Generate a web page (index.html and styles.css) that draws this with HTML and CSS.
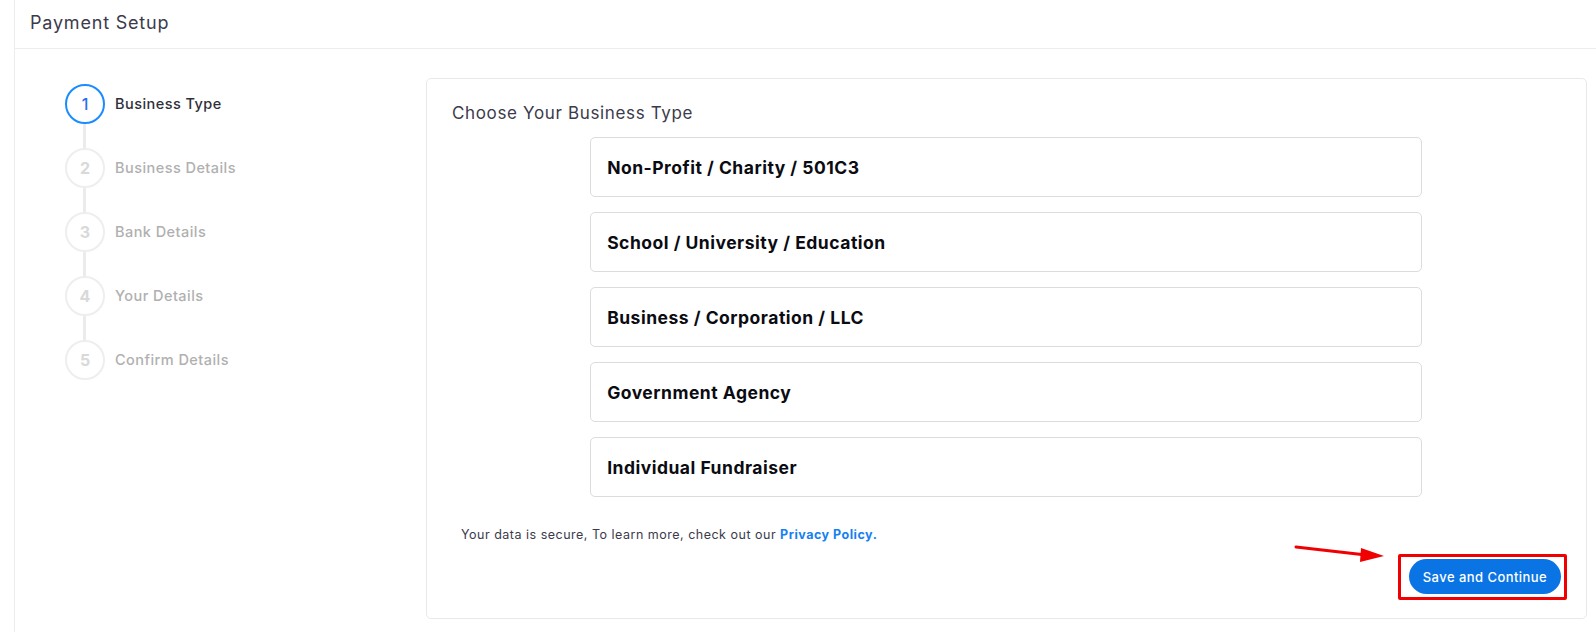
FILE: index.html
```html
<!DOCTYPE html>
<html lang="en">
<head>
<meta charset="utf-8">
<title>Payment Setup</title>
<link rel="stylesheet" href="styles.css">
</head>
<body>
<div class="page">
  <section class="outer-card">
    <header class="outer-header">Payment Setup</header>
    <div class="outer-body">
      <aside class="stepper">
        <div class="step active"><span class="step-num">1</span><span class="step-label">Business Type</span></div>
        <div class="step-line"></div>
        <div class="step"><span class="step-num">2</span><span class="step-label">Business Details</span></div>
        <div class="step-line"></div>
        <div class="step"><span class="step-num">3</span><span class="step-label">Bank Details</span></div>
        <div class="step-line"></div>
        <div class="step"><span class="step-num">4</span><span class="step-label">Your Details</span></div>
        <div class="step-line"></div>
        <div class="step"><span class="step-num">5</span><span class="step-label">Confirm Details</span></div>
      </aside>
      <main class="inner-card">
        <h2 class="inner-title">Choose Your Business Type</h2>
        <div class="options">
          <div class="option">Non-Profit / Charity / 501C3</div>
          <div class="option">School / University / Education</div>
          <div class="option">Business / Corporation / LLC</div>
          <div class="option">Government Agency</div>
          <div class="option">Individual Fundraiser</div>
        </div>
        <p class="secure">Your data is secure, To learn more, check out our <a class="policy" href="#">Privacy Policy.</a></p>
        <div class="actions">
          <button class="btn-primary" type="button">Save and Continue</button>
        </div>
      </main>
    </div>
  </section>
  <div class="annot-box"></div>
  <svg class="annot-arrow" width="100" height="20" viewBox="0 0 100 20">
    <line x1="2" y1="3" x2="72" y2="11" stroke="#f00000" stroke-width="3" stroke-linecap="round"/>
    <polygon points="90,12 67,4 66,18" fill="#f00000"/>
  </svg>
</div>
</body>
</html>
```

FILE: styles.css
```css
* { box-sizing: border-box; }
html, body { margin: 0; padding: 0; background: #fff; }
body {
  font-family: "Inter", "Open Sans", "Liberation Sans", sans-serif;
  color: #3b3b4c;
  width: 1596px;
  height: 632px;
  overflow: hidden;
}
.page {
  position: relative;
  padding-left: 14px;
  height: 632px;
}
.outer-card {
  border-left: 1px solid #ececec;
  height: 632px;
}
.outer-header {
  height: 49px;
  border-bottom: 1px solid #ececec;
  padding: 10px 0 0 15px;
  font-size: 18px;
  line-height: 26px;
  letter-spacing: 0.8px;
  color: #3b3b4c;
  font-weight: 400;
}
.outer-body {
  display: flex;
  padding-top: 29px;
}
.stepper {
  width: 411px;
  flex: none;
  padding: 6px 0 0 50px;
  display: flex;
  flex-direction: column;
}
.step {
  display: flex;
  align-items: center;
  gap: 10px;
}
.step-num {
  width: 40px;
  height: 40px;
  border-radius: 50%;
  border: 2px solid #eeeeee;
  display: flex;
  align-items: center;
  justify-content: center;
  font-size: 16px;
  font-weight: 700;
  color: #d9d9d9;
  flex: none;
}
.step-label {
  font-size: 14.5px;
  font-weight: 500;
  letter-spacing: 0.45px;
  color: #b0b0b0;
  margin-top: -2px;
}
.step.active .step-num {
  border-color: #1a8cff;
  color: #2a6df0;
  font-weight: 500;
}
.step.active .step-label { color: #2f2f3a; }
.step-line {
  width: 3px;
  height: 24px;
  background: #ebebeb;
  margin-left: 18px;
}
.inner-card {
  width: 1161px;
  height: 541px;
  border: 1px solid #e9e9e9;
  border-radius: 5px;
  padding: 21px 25px 24px 25px;
  display: flex;
  flex-direction: column;
}
.inner-title {
  margin: 0;
  font-size: 17px;
  line-height: 26px;
  letter-spacing: 0.65px;
  font-weight: 400;
  color: #3b3b4c;
}
.options {
  width: 75%;
  align-self: center;
  display: flex;
  flex-direction: column;
  gap: 15px;
  margin-top: 11px;
  margin-left: -1px;
}
.option {
  height: 60px;
  border: 1px solid #dcdcdc;
  border-radius: 5px;
  padding: 0 16px;
  display: flex;
  align-items: center;
  font-size: 17.5px;
  font-weight: 700;
  letter-spacing: 0.5px;
  color: #0b0b12;
}
.secure {
  margin: 28px 0 0 9px;
  font-size: 12.5px;
  line-height: 20px;
  letter-spacing: 0.5px;
  color: #3b3b4c;
}
.policy {
  color: #1580f2;
  font-weight: 700;
  text-decoration: none;
}
.actions {
  display: flex;
  justify-content: flex-end;
  margin-top: auto;
}
.btn-primary {
  width: 152px;
  height: 35px;
  border: none;
  border-radius: 18px;
  background: #0b74e5;
  color: #fff;
  font-family: inherit;
  font-size: 13px;
  font-weight: 500;
  letter-spacing: 0.45px;
  padding: 0;
}
.annot-box {
  position: absolute;
  left: 1398px;
  top: 554px;
  width: 169px;
  height: 46px;
  border: 3px solid #f00000;
  border-radius: 2px;
}
.annot-arrow {
  position: absolute;
  left: 1294px;
  top: 544px;
}
```
